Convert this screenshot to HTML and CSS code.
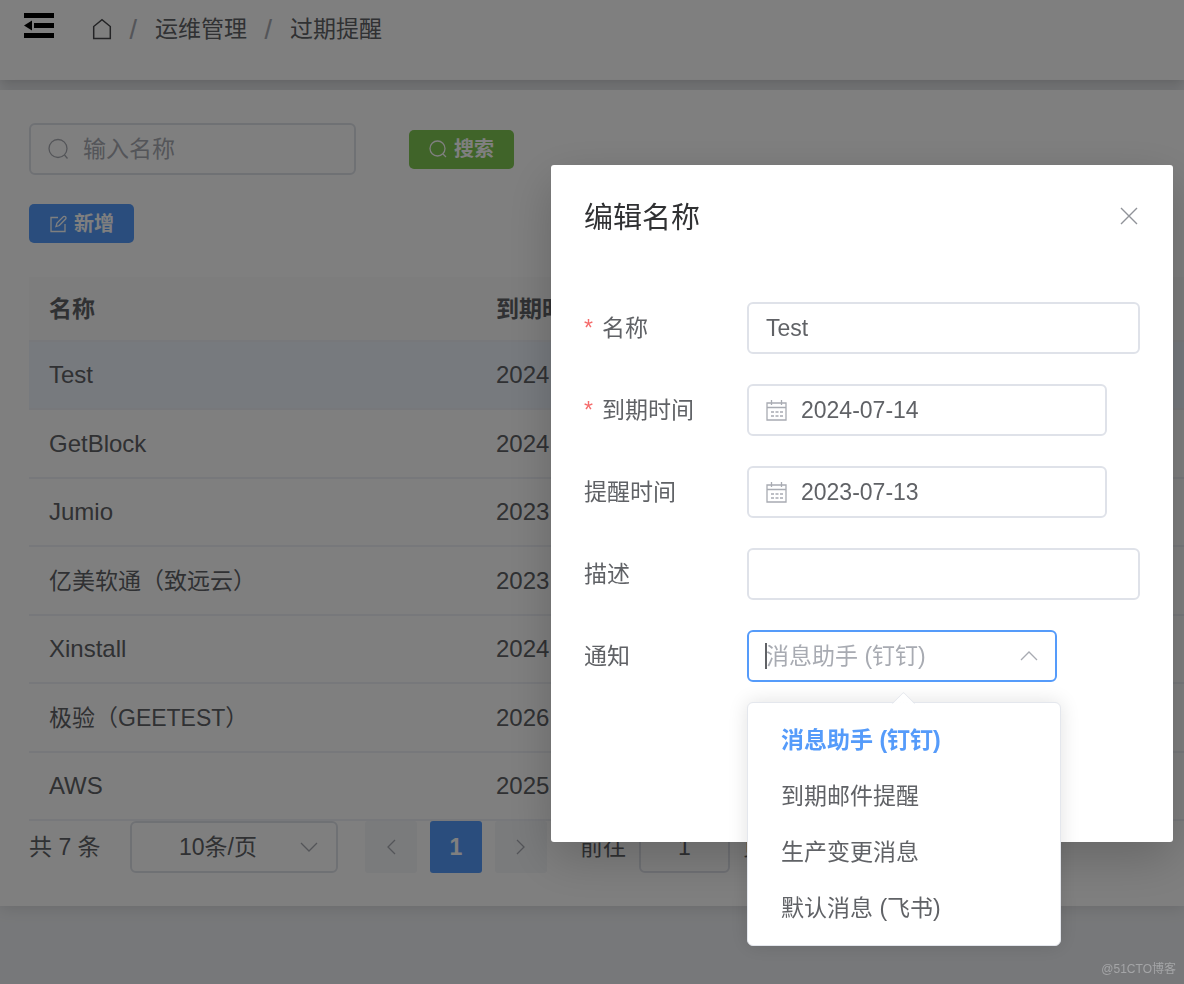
FILE: index.html
```html
<!DOCTYPE html>
<html lang="zh-CN">
<head>
<meta charset="utf-8">
<meta name="viewport" content="width=device-width, initial-scale=1">
<title>过期提醒</title>
<link rel="stylesheet" href="styles.css">
</head>
<body>
<div class="page">
  <header class="topbar">
    <button class="fold" type="button" aria-label="收起菜单">
      <svg width="30" height="26" viewBox="0 0 30 26"><path d="M0 0h30v5H0zM10 10h20v5H10zM0 20h30v5H0zM8 7.500v10L0 12.500z"/></svg>
    </button>
    <nav class="crumbs" aria-label="面包屑">
      <a class="home" href="#" aria-label="首页">
        <svg width="20" height="22" viewBox="0 0 20 22"><path d="M1.700 8.500 10 1.700l8.300 6.800v12H1.700z"/></svg>
      </a>
      <span class="slash">/</span>
      <a href="#">运维管理</a>
      <span class="slash">/</span>
      <a href="#">过期提醒</a>
    </nav>
  </header>

  <main class="card">
    <form class="search">
      <label class="box search-box">
        <svg class="icon" width="22" height="22" viewBox="0 0 22 22"><circle cx="10" cy="10.500" r="9"/><path d="m16.500 17 3 3.500"/></svg>
        <input type="text" placeholder="输入名称" aria-label="输入名称">
      </label>
      <button class="btn green" type="button">
        <svg class="icon" width="18" height="18" viewBox="0 0 18 18"><circle cx="8.500" cy="8.500" r="7.500"/><path d="m14 14 3 3"/></svg>
        搜索
      </button>
    </form>
    <div class="actions">
      <button class="btn blue" type="button">
        <svg class="icon" width="18" height="18" viewBox="0 0 18 18"><path d="M9 2.500H2v14h14V9M7 11.500l1-3.500 6.500-6.500q1.200-.5 2 .3t.3 2L10.300 10.500z"/></svg>
        新增
      </button>
    </div>

    <table class="list">
      <colgroup><col class="col-name"><col></colgroup>
      <thead><tr><th scope="col">名称</th><th scope="col">到期时间</th></tr></thead>
      <tbody>
        <tr class="current"><td>Test</td><td>2024</td></tr>
        <tr><td>GetBlock</td><td>2024</td></tr>
        <tr><td>Jumio</td><td>2023</td></tr>
        <tr><td class="han">亿美软通（致远云）</td><td>2023</td></tr>
        <tr><td>Xinstall</td><td>2024</td></tr>
        <tr><td class="han">极验（GEETEST）</td><td>2026</td></tr>
        <tr><td>AWS</td><td>2025</td></tr>
      </tbody>
    </table>

    <div class="pager">
      <span class="total">共 7 条</span>
      <div class="box size-box">
        <select aria-label="每页条数"><option>10条/页</option></select>
        <svg class="icon" width="18" height="12" viewBox="0 0 18 12"><path d="m1 2 8 8 8-8"/></svg>
      </div>
      <div class="pages">
        <button class="num" type="button" aria-label="上一页"><svg class="icon" width="10" height="16" viewBox="0 0 10 16"><path d="M9 1 2 8l7 7"/></svg></button>
        <button class="num active" type="button">1</button>
        <button class="num" type="button" aria-label="下一页"><svg class="icon" width="10" height="16" viewBox="0 0 10 16"><path d="m1 1 7 7-7 7"/></svg></button>
      </div>
      <label class="jump">前往 <span class="box jump-box"><input type="text" value="1"></span> 页</label>
    </div>
  </main>
</div>

<div class="overlay">
  <section class="dialog" role="dialog" aria-labelledby="dialog-title">
    <div class="dialog-head">
      <h2 id="dialog-title">编辑名称</h2>
      <button class="close" type="button" aria-label="关闭"><svg width="18" height="18" viewBox="0 0 18 18"><path d="m1 1 16 16M17 1 1 17"/></svg></button>
    </div>
    <form class="fields">
      <div class="row">
        <label for="name"><span class="star">*</span>名称</label>
        <div class="box"><input id="name" type="text" value="Test"></div>
      </div>
      <div class="row">
        <label for="expire"><span class="star">*</span>到期时间</label>
        <div class="box date">
          <svg class="icon" width="21" height="21" viewBox="0 0 21 21"><path d="M1 3h19v17H1zM1 7.500h19M5.500 0v5M15.500 0v5"/><path class="dots" d="M5 12h12M5 16h12"/></svg>
          <input id="expire" type="text" value="2024-07-14">
        </div>
      </div>
      <div class="row">
        <label for="remind">提醒时间</label>
        <div class="box date">
          <svg class="icon" width="21" height="21" viewBox="0 0 21 21"><path d="M1 3h19v17H1zM1 7.500h19M5.500 0v5M15.500 0v5"/><path class="dots" d="M5 12h12M5 16h12"/></svg>
          <input id="remind" type="text" value="2023-07-13">
        </div>
      </div>
      <div class="row">
        <label for="desc">描述</label>
        <div class="box"><input id="desc" type="text"></div>
      </div>
      <div class="row">
        <label for="notify">通知</label>
        <div class="box notify">
          <span class="caret"></span>
          <input id="notify" type="text" role="combobox" aria-expanded="true" aria-controls="notify-list" placeholder="消息助手 (钉钉)">
          <svg class="icon" width="18" height="12" viewBox="0 0 18 12"><path d="m1 10 8-8 8 8"/></svg>
          <ul class="menu" id="notify-list" role="listbox">
            <li class="selected" role="option" aria-selected="true">消息助手 (钉钉)</li>
            <li role="option">到期邮件提醒</li>
            <li role="option">生产变更消息</li>
            <li role="option">默认消息 (飞书)</li>
          </ul>
        </div>
      </div>
    </form>
  </section>
</div>
<div class="watermark">@51CTO博客</div>
</body>
</html>
```

FILE: styles.css
```css
* { box-sizing: border-box; }

body {
  margin: 0;
  height: 100vh;
  overflow: hidden;
  background: #eff1f4;
  color: #606266;
  font: 23px/32px "Liberation Sans", "Noto Sans CJK SC", sans-serif;
}

button, input, select { font: inherit; color: inherit; }
button { border: 0; padding: 0; background: none; }
a { color: inherit; text-decoration: none; }
svg { display: block; flex: none; }

.icon { fill: none; stroke: #a8abb2; stroke-width: 1.3; }

/* top bar */
.topbar {
  display: flex;
  align-items: flex-start;
  gap: 38px;
  height: 80px;
  padding: 13px 24px;
  background: #fff;
  box-shadow: 0 2px 12px rgba(0, 0, 0, .22);
}
.fold svg { fill: #000; }
.crumbs { display: flex; align-items: center; gap: 17px; }
.crumbs .home svg { fill: none; stroke: #48494c; stroke-width: 1.5; }
.slash {
  width: 9px;
  font-family: Inter, sans-serif;
  font-weight: 500;
  color: #a8abb2;
}

/* content card */
.card {
  position: relative;
  margin-top: 10px;
  padding: 33px 0 33px 29px;
  background: #fff;
  box-shadow: 0 2px 16px rgba(0, 0, 0, .12);
}
.box {
  display: flex;
  align-items: center;
  height: 52px;
  padding: 0 17px;
  border: 2px solid #dfe2e9;
  border-radius: 6px;
  background: #fff;
}
.box input {
  flex: 1;
  min-width: 0;
  width: 100%;
  height: 100%;
  padding: 0;
  border: 0;
  outline: 0;
  background: none;
}
.box input::placeholder { color: #a8abb2; opacity: 1; }

.search { display: flex; align-items: center; gap: 53px; }
.search-box { width: 327px; gap: 13px; }
.btn {
  display: flex;
  align-items: center;
  justify-content: center;
  gap: 7px;
  width: 105px;
  height: 39px;
  border-radius: 5px;
  color: #fff;
  font-size: 20px;
  font-weight: bold;
}
.btn .icon { stroke: #fff; }
.green { background: #80c852; }
.blue { background: #559bfa; }
.actions { padding: 29px 0 34px; }

.list {
  width: 100%;
  border-collapse: separate;
  border-spacing: 0;
  table-layout: fixed;
}
.col-name { width: 447px; }
.list th, .list td {
  height: 68px;
  padding: 0 20px;
  border-bottom: 2px solid #eff1f7;
  text-align: left;
}
.list th { height: 65px; background: #fafafa; color: #606266; }
.list td { font-size: 24px; }
.list td.han { font-size: 23px; }
.list tbody tr:nth-child(even) td { height: 69px; }
.list .current td { background: #eef4fd; }

.pager { display: flex; align-items: center; }
.total { width: 101px; }
.size-box { position: relative; width: 208px; padding: 0; }
.size-box select {
  width: 100%;
  height: 100%;
  padding: 0 47px;
  border: 0;
  background: none;
  appearance: none;
}
.size-box .icon { position: absolute; right: 18px; pointer-events: none; }
.pages { display: flex; gap: 13px; margin: 0 33px 0 27px; }
.num {
  display: flex;
  align-items: center;
  justify-content: center;
  width: 52px;
  height: 52px;
  border-radius: 3px;
  background: #f4f6f9;
}
.num.active { background: #559bfa; color: #fff; font-weight: bold; }
.jump { display: flex; align-items: center; gap: 13px; }
.jump-box { width: 91px; }
.jump-box input { text-align: center; }

/* dialog */
.overlay {
  position: fixed;
  inset: 0;
  display: flex;
  align-items: flex-start;
  justify-content: flex-end;
  padding: 165px 11px 0;
  background: rgba(0, 0, 0, .5);
}
.dialog {
  width: 622px;
  max-width: 100%;
  padding: 33px 33px 160px;
  border-radius: 3px;
  background: #fff;
  box-shadow: 0 16px 48px rgba(0, 0, 0, .2);
}
.dialog-head { display: flex; justify-content: space-between; align-items: center; }
.dialog h2 { margin: 0; font-size: 29px; line-height: 40px; font-weight: normal; color: #303133; }
.close { padding: 0 2px 4px; }
.close svg { fill: none; stroke: #909399; stroke-width: 1.4; }
.fields { display: grid; gap: 30px; margin-top: 64px; }
.row { display: grid; grid-template-columns: 163px 1fr; align-items: center; }
.star { margin-right: 9px; color: #f56c6c; }
.date { gap: 14px; margin-right: 33px; }
.date .dots { stroke-dasharray: 3 1.5; }
.notify { position: relative; margin-right: 83px; border-color: #559bfa; }
.caret { position: absolute; left: 16px; width: 2px; height: 26px; background: #606266; }

.menu {
  position: absolute;
  top: 70px;
  left: -2px;
  width: 314px;
  margin: 0;
  padding: 9px 0;
  border: 1px solid #e4e7ed;
  border-radius: 6px;
  background: #fff;
  box-shadow: 0 0 20px rgba(0, 0, 0, .12);
  list-style: none;
}
.menu::before {
  content: "";
  position: absolute;
  top: -8px;
  left: 147px;
  width: 15px;
  height: 15px;
  border: 1px solid #e4e7ed;
  border-color: #e4e7ed transparent transparent #e4e7ed;
  border-radius: 2px 0 0;
  background: linear-gradient(135deg, #fff 50%, transparent 50%);
  transform: rotate(45deg);
}
.menu li { padding: 0 33px; line-height: 56px; }
.menu .selected { color: #559bfa; font-weight: bold; }

.watermark {
  position: fixed;
  right: 8px;
  bottom: 6px;
  font-size: 12px;
  line-height: 18px;
  color: #a4a5a7;
}
```
